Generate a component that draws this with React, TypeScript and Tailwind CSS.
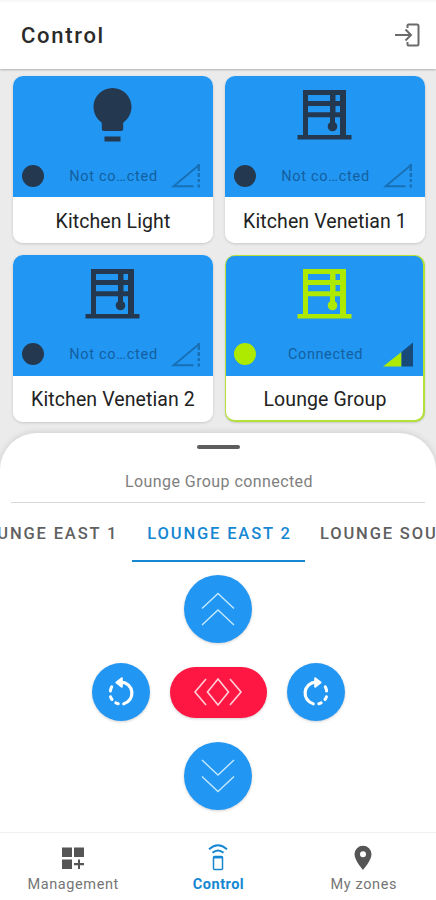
import React from "react";

function Bulb() {
  return (
    <svg width="55" height="56" viewBox="0 0 55 56" fill="#243950">
      <path d="M27.500 1C17 1 8.500 9.400 8.500 19.800c0 6.800 3.500 12.500 8.300 16V42q0 2 2 2h17.400q2 0 2-2V35.800c4.800-3.500 8.300-9.200 8.300-16C46.500 9.400 38 1 27.500 1z" />
      <path d="M19.500 49.500h16v5h-16z" />
    </svg>
  );
}

function Venetian({ color }: { color: string }) {
  return (
    <svg width="55" height="56" viewBox="0 0 55 56" fill={color}>
      <path
        d="M6 3h43v45h5.500v4.500H.5V48H6zM11 8v6h22V8zM38.500 8v6h4.500V8zM11 19v6.200h22V19zM38.500 19v6.200h4.500V19zM11 30.200V48h32V30.200z"
        fillRule="evenodd"
      />
      <path d="M33 7h5v29h-5z" />
      <circle cx="35.500" cy="39.500" r="4.800" />
    </svg>
  );
}

function Signal({ on }: { on?: boolean }) {
  return on ? (
    <svg width="30" height="25" viewBox="0 0 30 25">
      <path d="M0 24.500L18.500 10v14.500z" fill="#aeea00" />
      <path d="M18.500 10L30 .5v24H18.500z" fill="#174a78" />
    </svg>
  ) : (
    <svg width="30" height="25" viewBox="0 0 30 25" fill="none" stroke="#176fb5" strokeWidth="1.900">
      <path d="M22.500 23.300H2.500L27.500 2.500" />
      <path d="M27.800 1v7M27.800 10v4M27.800 16v3M27.800 21.500v3" strokeWidth="2.400" />
    </svg>
  );
}

interface DeviceProps {
  name: string;
  light?: boolean;
  connected?: boolean;
}

function DeviceCard({ name, light, connected }: DeviceProps) {
  return (
    <div
      className={`flex h-[167px] flex-col overflow-hidden rounded-[10px] ${
        connected
          ? "bg-[#b4e03a] p-[1.500px] shadow-[0_1px_2px_rgba(0,0,0,0.15)]"
          : "bg-white shadow-[0_1px_3px_rgba(0,0,0,0.16)]"
      }`}
    >
      <div
        className={`flex shrink-0 flex-col bg-[#2196f3] ${
          connected ? "h-[119.500px] rounded-t-[8.500px] px-[8px] pt-[9.500px]" : "h-[121px] px-[9.500px] pt-[11px]"
        }`}
      >
        <div className="flex justify-center">
          {light ? <Bulb /> : <Venetian color={connected ? "#aeea00" : "#243950"} />}
        </div>
        <div className="mt-[20px] flex h-[25px] items-center">
          <div className={`size-[22px] rounded-full ${connected ? "bg-[#aeea00]" : "bg-[#243950]"}`} />
          <div className="flex-1 pt-[2px] text-center text-[14.500px] leading-[22px] text-[#14609f]">
            {connected ? (
              <span className="ml-[12px] tracking-[0.600px]">Connected</span>
            ) : (
              <span className="ml-[12px] tracking-[0.720px]">Not co…cted</span>
            )}
          </div>
          <div className="mr-[2px]">
            <Signal on={connected} />
          </div>
        </div>
      </div>
      <div
        className={`flex flex-1 items-center justify-center whitespace-nowrap bg-white pl-px pt-[3px] text-[19.500px] tracking-[0.100px] text-[#222] ${
          connected ? "rounded-b-[8.500px]" : ""
        }`}
      >
        {name}
      </div>
    </div>
  );
}

function Chevrons({ down }: { down?: boolean }) {
  return (
    <button className="flex size-[68px] items-center justify-center rounded-full bg-[#2196f3] shadow-[0_1px_3px_rgba(0,0,0,0.18)]">
      <svg width="34" height="34" viewBox="0 0 34 34" fill="none" stroke="#c3eaff" strokeWidth="1.400" className={down ? "rotate-180" : ""}>
        <path d="M1 16.500L17 1.500l16 15M1 33L17 18l16 15" />
      </svg>
    </button>
  );
}

function Rotate({ clockwise }: { clockwise?: boolean }) {
  return (
    <button className="flex size-[58px] items-center justify-center rounded-full bg-[#2196f3] shadow-[0_1px_3px_rgba(0,0,0,0.18)]">
      <svg width="30" height="32" viewBox="0 0 30 32" className={clockwise ? "-scale-x-100" : ""} fill="none" stroke="#fff" strokeWidth="3.200" strokeLinecap="round">
        <path d="M15.500 6.200A11 11 0 0 1 17.800 27.800" />
        <path d="M12.200 27.800Q10.800 27.500 9.800 26.800M6 23.500Q5 22.200 4.600 20.800M4.400 15Q4.700 12.300 5.700 10.800" strokeWidth="3" />
        <path d="M15.800 2.200v8.600L10.400 6.500z" fill="#fff" strokeWidth="2" strokeLinejoin="round" />
      </svg>
    </button>
  );
}

export default function App() {
  return (
    <div className="flex h-[900px] w-[436px] flex-col overflow-hidden bg-[#ebebeb] font-['Roboto','Liberation_Sans',sans-serif]">
      <header className="z-10 flex h-[69px] shrink-0 items-center justify-between border-t-2 border-[#f7f7f7] bg-white pl-[21px] pr-[16px] shadow-[0_1px_2px_rgba(0,0,0,0.25)]">
        <h1 className="text-[22px] font-medium tracking-[1.700px] text-[#2a2a2a]">Control</h1>
        <svg width="25" height="24" viewBox="0 0 25 24" fill="none" stroke="#6b6b6b" strokeWidth="2" className="-mt-[2px]">
          <path d="M12.500 5V2.500q0-1 1-1H22q1.500 0 1.500 1.500v18q0 1.500-1.500 1.500h-8.500q-1 0-1-1V19M0 12h16M10.500 6.500L16 12l-5.500 5.500" />
        </svg>
      </header>

      <main className="grid h-[364px] shrink-0 grid-cols-2 content-start gap-x-[12px] gap-y-[11.500px] pl-[12.500px] pr-[11.500px] pt-[7px]">
        <DeviceCard name="Kitchen Light" light />
        <DeviceCard name="Kitchen Venetian 1" />
        <DeviceCard name="Kitchen Venetian 2" />
        <DeviceCard name="Lounge Group" connected />
      </main>

      <section className="flex h-[399px] shrink-0 flex-col items-center rounded-t-[37px] bg-white shadow-[0_-1px_6px_rgba(0,0,0,0.12)]">
        <div className="mt-[11.500px] h-[4.500px] w-[43px] shrink-0 rounded-full bg-[#5d5d5d]" />
        <p className="mt-[21px] h-[24px] pl-[2px] text-[16px] leading-[24px] tracking-[0.420px] text-[#808080]">Lounge Group connected</p>
        <div className="mt-[7.500px] h-[1px] w-[414px] shrink-0 bg-[#d8d8d8]" />
        <nav className="flex h-[59px] w-full shrink-0 justify-center overflow-hidden whitespace-nowrap text-[16.500px] font-medium leading-[24px] tracking-[1.850px] text-[#606060]">
          <div className="w-[173px] shrink-0 pl-[2px] pt-[19.500px] text-center">LOUNGE EAST 1</div>
          <div className="w-[173px] shrink-0 border-b-2 border-[#1687d2] pl-[3px] pt-[19.500px] text-center text-[#1687d2]">LOUNGE EAST 2</div>
          <div className="w-[173px] shrink-0 pl-[15.500px] pt-[19.500px]">LOUNGE SOUTH</div>
        </nav>
        <div className="mt-[13px] flex flex-col items-center gap-[24px]">
          <Chevrons />
          <div className="flex h-[51px] items-center gap-[20px]">
            <Rotate />
            <button className="flex h-[51px] w-[97px] items-center justify-center rounded-full bg-[#ff1744] shadow-[0_1px_3px_rgba(0,0,0,0.18)]">
              <svg width="50" height="30" viewBox="0 0 50 30" fill="none" stroke="#ffd0d8" strokeWidth="1.600">
                <path d="M13 2L2 15l11 13M37 2l11 13-11 13M25 2l10.500 13L25 28 14.500 15z" />
              </svg>
            </button>
            <Rotate clockwise />
          </div>
          <Chevrons down />
        </div>
      </section>

      <footer className="grid h-[68px] shrink-0 grid-cols-3 border-t border-[#f0f0f0] bg-white text-[14.500px] leading-[18px] text-[#757575]">
        <div className="flex flex-col items-center pt-[12px]">
          <svg width="24" height="26" viewBox="0 0 24 26" fill="#555">
            <path d="M1 2.500h10v9.500H1zM13 2.500h10v9.500H13zM1 14.500h10V24H1zM17 14.500h2V18h4v2.200h-4V24h-2v-3.800h-4V18h4z" />
          </svg>
          <span className="mt-[5px] pl-px tracking-[0.600px]">Management</span>
        </div>
        <div className="flex flex-col items-center pt-[11px] text-[#1687d2]">
          <svg width="20" height="27" viewBox="0 0 20 27" fill="none" stroke="#1687d2" strokeWidth="1.900">
            <path d="M1 5.200Q10-2.800 19 5.200M4.500 8.800Q10 4 15.500 8.800" />
            <rect x="5.500" y="12.500" width="9" height="13" rx="1" strokeWidth="1.500" />
            <path d="M5.500 13.500h9" />
          </svg>
          <span className="mt-[5px] pl-px font-bold tracking-[0.500px]">Control</span>
        </div>
        <div className="flex flex-col items-center pt-[11px]">
          <svg width="18" height="27" viewBox="0 0 18 27" fill="#555">
            <path fillRule="evenodd" d="M9 1.800A8.500 8.500 0 0 0 .5 10.300C.5 16.500 9 26 9 26s8.500-9.500 8.500-15.700A8.500 8.500 0 0 0 9 1.800zM9 13.300a3 3 0 1 1 0-6 3 3 0 0 1 0 6z" />
          </svg>
          <span className="mt-[5px] pl-px tracking-[0.600px]">My zones</span>
        </div>
      </footer>
    </div>
  );
}
